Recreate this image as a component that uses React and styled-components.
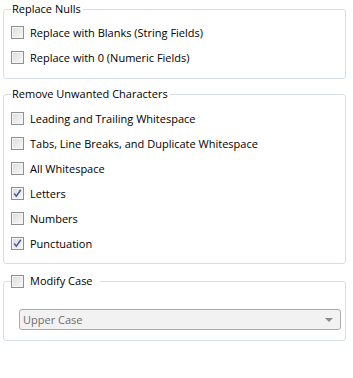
import React from "react";
import styled, { createGlobalStyle } from "styled-components";

const GlobalStyle = createGlobalStyle`
  html, body {
    margin: 0;
    padding: 0;
    background: #ffffff;
  }
  body {
    font-family: "Open Sans", "Noto Sans", sans-serif;
    font-size: 11px;
    color: #000;
  }
`;

const Page = styled.div`
  width: 353px;
  height: 378px;
  padding: 1px 7px 0 3px;
  box-sizing: border-box;
  display: flex;
  flex-direction: column;
`;

const Group = styled.fieldset`
  margin: 0 0 ${(p) => p.$gap || 0}px 0;
  padding: ${(p) => p.$pad || "4px 4px 7px 7px"};
  border: 1px solid #d5dfe5;
  border-radius: 3px;
  min-width: 0;
`;

const Legend = styled.legend`
  padding: ${(p) => p.$pad || "0 2px 0 1px"};
  margin-left: ${(p) => p.$shift || 0}px;
  height: 16px;
  line-height: 16px;
  display: flex;
  align-items: center;
  gap: 6px;
  white-space: nowrap;
`;

const Row = styled.label`
  height: 25px;
  display: flex;
  align-items: center;
  gap: 6px;
  white-space: nowrap;
`;

const Box = styled.span`
  width: 13px;
  height: 13px;
  box-sizing: border-box;
  border: 1px solid #8e8f8f;
  background: linear-gradient(135deg, #dcdcdc 0%, #f0f0f0 70%, #fafafa 100%);
  box-shadow: inset 0 0 0 1px #f6f6f6;
  display: flex;
  align-items: center;
  justify-content: center;
  flex-shrink: 0;
`;

const Select = styled.div`
  height: 21px;
  box-sizing: border-box;
  border: 1px solid #acacac;
  border-radius: 3px;
  background: #f2f2f2;
  color: #6d6d6d;
  display: flex;
  align-items: center;
  justify-content: space-between;
  padding: 0 7px 0 3px;
`;

const Arrow = styled.span`
  width: 0;
  height: 0;
  border-left: 4px solid transparent;
  border-right: 4px solid transparent;
  border-top: 4px solid #8a8a8a;
  margin-top: 1px;
`;

const Check = ({ checked }) => (
  <Box>
    {checked && (
      <svg width="9" height="9" viewBox="0 0 9 9">
        <path
          d="M1.2 4.6 L3.3 7.2 L7.8 0.8"
          fill="none"
          stroke="#4a5f9c"
          strokeWidth="1.6"
        />
      </svg>
    )}
  </Box>
);

const Option = ({ label, checked }) => (
  <Row>
    <Check checked={checked} />
    {label}
  </Row>
);

const unwanted = [
  ["Leading and Trailing Whitespace", false],
  ["Tabs, Line Breaks, and Duplicate Whitespace", false],
  ["All Whitespace", false],
  ["Letters", true],
  ["Numbers", false],
  ["Punctuation", true],
];

export default function App() {
  return (
    <>
      <GlobalStyle />
      <Page>
        <Group $gap={7} $pad="3px 4px 8px 7px">
          <Legend>Replace Nulls</Legend>
          <Option label="Replace with Blanks (String Fields)" />
          <Option label="Replace with 0 (Numeric Fields)" />
        </Group>
        <Group $gap={9} $pad="4px 4px 7px 7px">
          <Legend>Remove Unwanted Characters</Legend>
          {unwanted.map(([label, checked]) => (
            <Option key={label} label={label} checked={checked} />
          ))}
        </Group>
        <Group $pad="20px 4px 10px 15px">
          <Legend $pad="0 7px 0 0" $shift={-8}>
            <Check />
            Modify Case
          </Legend>
          <Select>
            Upper Case
            <Arrow />
          </Select>
        </Group>
      </Page>
    </>
  );
}
